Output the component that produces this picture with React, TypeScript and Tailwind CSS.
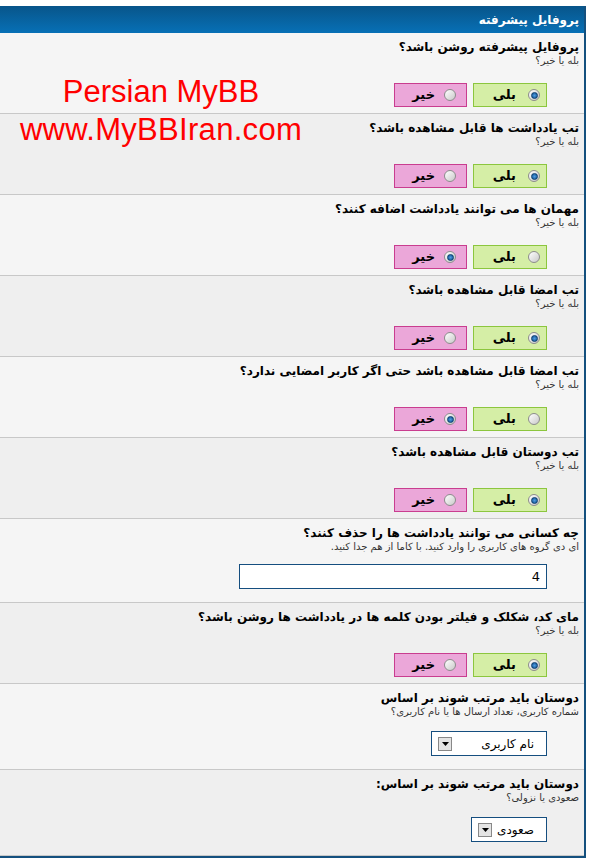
import type { ReactNode } from "react"

type Row =
  | { title: string; desc: string; kind: "yesno"; value: boolean }
  | { title: string; desc: string; kind: "text"; value: string }
  | { title: string; desc: string; kind: "select"; value: string; width: string }

const rows: Row[] = [
  { title: "پروفایل پیشرفته روشن باشد؟", desc: "بله یا خیر؟", kind: "yesno", value: true },
  { title: "تب یادداشت ها قابل مشاهده باشد؟", desc: "بله یا خیر؟", kind: "yesno", value: true },
  { title: "مهمان ها می توانند یادداشت اضافه کنند؟", desc: "بله یا خیر؟", kind: "yesno", value: false },
  { title: "تب امضا قابل مشاهده باشد؟", desc: "بله یا خیر؟", kind: "yesno", value: true },
  {
    title: "تب امضا قابل مشاهده باشد حتی اگر کاربر امضایی ندارد؟",
    desc: "بله یا خیر؟",
    kind: "yesno",
    value: false,
  },
  { title: "تب دوستان قابل مشاهده باشد؟", desc: "بله یا خیر؟", kind: "yesno", value: true },
  {
    title: "چه کسانی می توانند یادداشت ها را حذف کنند؟",
    desc: "ای دی گروه های کاربری را وارد کنید. با کاما از هم جدا کنید.",
    kind: "text",
    value: "4",
  },
  {
    title: "مای کد، شکلک و فیلتر بودن کلمه ها در یادداشت ها روشن باشد؟",
    desc: "بله یا خیر؟",
    kind: "yesno",
    value: true,
  },
  {
    title: "دوستان باید مرتب شوند بر اساس",
    desc: "شماره کاربری، تعداد ارسال ها یا نام کاربری؟",
    kind: "select",
    value: "نام کاربری",
    width: "w-[116px]",
  },
  {
    title: "دوستان باید مرتب شوند بر اساس:",
    desc: "صعودی یا نزولی؟",
    kind: "select",
    value: "صعودی",
    width: "w-[76px]",
  },
]

function Radio({ checked }: { checked: boolean }) {
  return (
    <span className="flex h-[12px] w-[12px] items-center justify-center rounded-full border border-[#8c8c8c] bg-[linear-gradient(135deg,#ffffff,#c9c9c9)]">
      {checked && (
        <span className="h-[7px] w-[7px] rounded-full border border-[#0c3f70] bg-[radial-gradient(circle,#4d9be0,#0f4f8f)]" />
      )}
    </span>
  )
}

function YesNo({ value }: { value: boolean }) {
  return (
    <div className="mr-[32px] mt-[16px] flex gap-[6px]">
      <label className="flex h-[24px] w-[74px] items-center border border-[#8cc63e] bg-[#d5eea6] pr-[6px]">
        <Radio checked={value} />
        <span className="mr-[12px] text-[13px] font-bold text-black">بلی</span>
      </label>
      <label className="flex h-[24px] w-[73px] items-center border border-[#c93d8f] bg-[#eba7d9] pr-[10px]">
        <Radio checked={!value} />
        <span className="mr-[9px] text-[13px] font-bold text-black">خیر</span>
      </label>
    </div>
  )
}

function Select({ value, width }: { value: string; width: string }) {
  return (
    <div
      className={`mr-[32px] mt-[13px] flex h-[25px] items-center justify-between border border-[#154e7f] bg-white pl-[6px] pr-[12px] ${width}`}
    >
      <span className="text-[12px] text-black">{value}</span>
      <span className="flex h-[14px] w-[14px] items-center justify-center border border-[#888] bg-[#e4e4e4]">
        <svg width="7" height="4" viewBox="0 0 7 4">
          <path d="M0 0h7L3.5 4z" fill="#000" />
        </svg>
      </span>
    </div>
  )
}

function Cell({ row, odd }: { row: Row; odd: boolean }) {
  let control: ReactNode
  if (row.kind === "yesno") control = <YesNo value={row.value} />
  else if (row.kind === "text")
    control = (
      <div className="mr-[32px] mt-[11px] flex h-[25px] w-[308px] items-center border border-[#154e7f] bg-white px-[6px] text-[13px] text-black">
        {row.value}
      </div>
    )
  else control = <Select value={row.value} width={row.width} />

  return (
    <div
      className={`border-b border-[#c8c8c8] pb-[7px] pr-[5px] pt-[7px] ${odd ? "bg-[#f5f5f5]" : "bg-[#efefef]"} ${
        row.kind === "yesno" ? "h-[81px]" : row.kind === "text" ? "h-[84px]" : "h-[86px]"
      }`}
    >
      <div className="text-[12px] font-bold leading-[14px] text-black">{row.title}</div>
      <div className="text-[10px] leading-[13px] text-[#333]">{row.desc}</div>
      {control}
    </div>
  )
}

export default function App() {
  return (
    <div className="relative min-h-[866px] bg-white pt-[6px] font-['DejaVu_Sans',sans-serif]">
      <div dir="rtl" className="w-[586px] border-b-2 border-l-0 border-r-2 border-[#14507e]">
        <div className="flex h-[27px] items-center bg-[linear-gradient(#08558a,#0770b6)] pr-[5px] text-[12px] font-bold text-white">
          پروفایل پیشرفته
        </div>
        {rows.map((row, i) => (
          <Cell key={i} row={row} odd={i % 2 === 0} />
        ))}
      </div>

      {/* site stamp over the form */}
      <div className="absolute left-0 top-[73px] w-[322px] text-center font-['Liberation_Sans',sans-serif] text-[31px] leading-[38px] text-[#ff0000]">
        <div>Persian MyBB</div>
        <div className="tracking-[0.3px]">www.MyBBIran.com</div>
      </div>
    </div>
  )
}
